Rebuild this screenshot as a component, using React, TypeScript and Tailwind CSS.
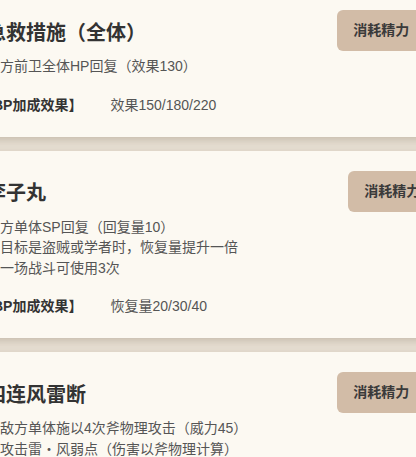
import React from 'react';

interface Skill {
  name: string;
  cost: number;
  lines: string[];
  bonus?: string;
}

const skills: Skill[] = [
  {
    name: '急救措施（全体）',
    cost: 8,
    lines: ['我方前卫全体HP回复（效果130）'],
    bonus: '效果150/180/220',
  },
  {
    name: '李子丸',
    cost: 0,
    lines: [
      '我方单体SP回复（回复量10）',
      '若目标是盗贼或学者时，恢复量提升一倍',
      '每一场战斗可使用3次',
    ],
    bonus: '恢复量20/30/40',
  },
  {
    name: '四连风雷断',
    cost: 8,
    lines: ['对敌方单体施以4次斧物理攻击（威力45）', '可攻击雷・风弱点（伤害以斧物理计算）'],
    bonus: '威力55/65/75',
  },
];

const SkillCard: React.FC<{ skill: Skill }> = ({ skill }) => {
  return (
    <div className="bg-[#fcf9f2] px-5 pt-5 pb-[22px] shadow-[0_3px_8px_rgba(80,60,30,0.2)]">
      <div className="flex items-center justify-between">
        <h2 className="mt-1 text-[20px] leading-7 font-bold text-[#333]">{skill.name}</h2>
        <div className="h-[41px] px-4 flex items-center rounded-md bg-[#d2bca7] text-[14px] font-bold text-[#3a3a3a] whitespace-nowrap">
          消耗精力
          <span className={skill.cost > 0 ? 'ml-[15px]' : 'ml-[4px]'}>{skill.cost}</span>
        </div>
      </div>
      <div className="mt-[5px] text-[14px] leading-[20.5px] text-[#555]">
        {skill.lines.map((line) => (
          <div key={line}>{line}</div>
        ))}
      </div>
      {skill.bonus && (
        <div className="mt-[18px] flex text-[14px] leading-5">
          <span className="-ml-[7px] font-bold text-[#333]">【BP加成效果】</span>
          <span className="ml-[28px] text-[#555]">{skill.bonus}</span>
        </div>
      )}
    </div>
  );
};

export default function App() {
  return (
    <div
      className="w-full h-screen overflow-hidden bg-[#e6ded2]"
      style={{ fontFamily: '"Liberation Sans", "Noto Sans CJK SC", sans-serif' }}
    >
      <div className="-mt-[10px] -ml-[34px] w-[502px] flex flex-col gap-[14px]">
        {skills.map((s) => (
          <SkillCard key={s.name} skill={s} />
        ))}
      </div>
    </div>
  );
}
